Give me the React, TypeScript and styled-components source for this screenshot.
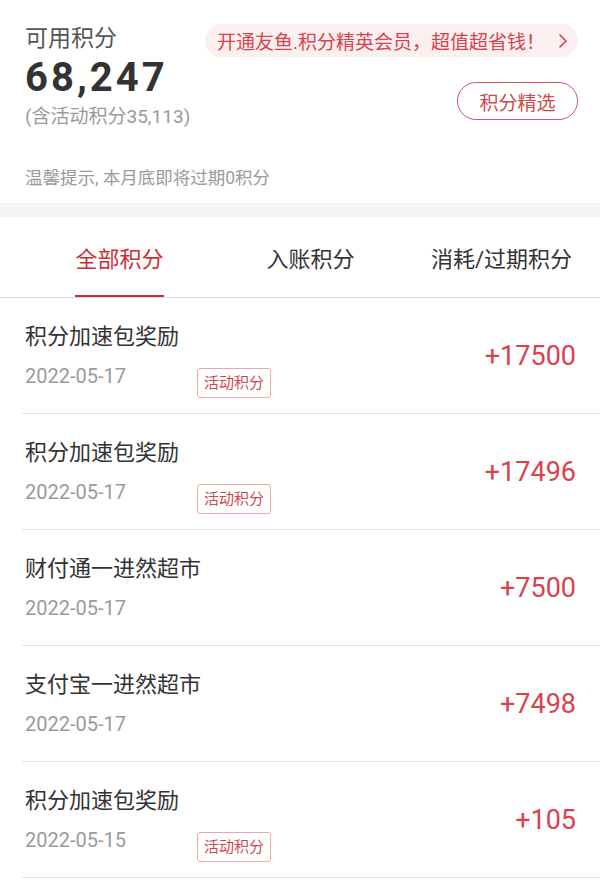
import React from "react";
import styled, { createGlobalStyle } from "styled-components";

const GlobalStyle = createGlobalStyle`
  html, body {
    margin: 0;
    padding: 0;
    background: #ffffff;
  }
  body {
    font-family: Roboto, "Noto Sans CJK SC", "Noto Sans", sans-serif;
    color: #333333;
    -webkit-font-smoothing: antialiased;
  }
  * { box-sizing: border-box; }
`;

const Page = styled.div`
  width: 600px;
  background: #ffffff;
`;

const Header = styled.header`
  height: 203px;
  display: flex;
  flex-direction: column;
  padding: 24px 22px 0 25px;
`;

const TopRow = styled.div`
  display: flex;
  justify-content: space-between;
  align-items: flex-start;
`;

const Summary = styled.div`
  display: flex;
  flex-direction: column;
  white-space: nowrap;
`;

const Label = styled.div`
  font-size: 23px;
  line-height: 30px;
  color: #555555;
`;

const Balance = styled.div`
  margin-top: 2px;
  font-size: 40px;
  line-height: 44px;
  font-weight: 700;
  letter-spacing: 3px;
  color: #333333;
`;

const SubNote = styled.div`
  margin-top: 4px;
  font-size: 19px;
  line-height: 26px;
  color: #9a9a9a;
`;

const Tip = styled.div`
  margin-top: 36px;
  font-size: 17.5px;
  line-height: 24px;
  color: #9a9a9a;
  white-space: nowrap;
`;

const Actions = styled.div`
  display: flex;
  flex-direction: column;
  align-items: flex-end;
`;

const Promo = styled.a`
  height: 33px;
  display: flex;
  align-items: center;
  gap: 13px;
  padding: 0 10px 0 12px;
  border-radius: 17px;
  background: #fcefef;
  color: #d5434c;
  font-size: 19px;
  text-decoration: none;
  white-space: nowrap;
`;

const PillButton = styled.button`
  margin-top: 25px;
  width: 121px;
  height: 38px;
  border: 1.5px solid #d6545a;
  border-radius: 19px;
  background: #ffffff;
  color: #cf474e;
  font-family: inherit;
  font-size: 19px;
  padding: 0;
  cursor: pointer;
`;

const Band = styled.div`
  height: 14px;
  background: #f4f4f4;
`;

const TabBar = styled.nav`
  height: 81px;
  display: flex;
  padding: 0 3px 0 24px;
  border-bottom: 1px solid #dedede;
`;

const TabItem = styled.div`
  flex: 1;
  display: flex;
  justify-content: center;
`;

const TabLabel = styled.span<{ $active?: boolean }>`
  display: flex;
  align-items: center;
  padding-top: 2px;
  font-size: 22px;
  color: ${(p) => (p.$active ? "#cf2b33" : "#333333")};
  border-bottom: 2px solid ${(p) => (p.$active ? "#cf2b33" : "transparent")};
  white-space: nowrap;
`;

const List = styled.ul`
  list-style: none;
  margin: 0;
  padding: 0 0 0 22px;
`;

const Row = styled.li`
  height: 116px;
  display: flex;
  justify-content: space-between;
  padding: 0 24px 0 3px;
  border-bottom: 1px solid #e2e2e2;
`;

const Info = styled.div`
  display: flex;
  flex-direction: column;
  padding-top: 24px;
`;

const Title = styled.div`
  font-size: 22px;
  line-height: 30px;
  color: #333333;
`;

const Meta = styled.div`
  margin-top: 12px;
  display: flex;
  align-items: flex-start;
`;

const DateText = styled.span`
  width: 172px;
  font-size: 20px;
  line-height: 24px;
  color: #9a9a9a;
`;

const Tag = styled.span`
  margin-top: 4px;
  height: 30px;
  padding: 0 6px;
  border: 1px solid #e8a9a9;
  border-radius: 3px;
  font-size: 15px;
  line-height: 28px;
  color: #cf474e;
  white-space: nowrap;
`;

const Amount = styled.span`
  align-self: center;
  font-size: 27px;
  line-height: 32px;
  color: #d8434b;
`;

const Chevron = () => (
  <svg width="10" height="16" viewBox="0 0 10 16" fill="none">
    <polyline
      points="2,2 8,8 2,14"
      stroke="#d5434c"
      strokeWidth="1.6"
      strokeLinecap="round"
      strokeLinejoin="round"
    />
  </svg>
);

type Record = {
  title: string;
  date: string;
  amount: string;
  activity?: boolean;
};

const records: Record[] = [
  { title: "积分加速包奖励", date: "2022-05-17", amount: "+17500", activity: true },
  { title: "积分加速包奖励", date: "2022-05-17", amount: "+17496", activity: true },
  { title: "财付通一进然超市", date: "2022-05-17", amount: "+7500" },
  { title: "支付宝一进然超市", date: "2022-05-17", amount: "+7498" },
  { title: "积分加速包奖励", date: "2022-05-15", amount: "+105", activity: true },
];

const tabs = ["全部积分", "入账积分", "消耗/过期积分"];

export default function App() {
  return (
    <Page>
      <GlobalStyle />
      <Header>
        <TopRow>
          <Summary>
            <Label>可用积分</Label>
            <Balance>68,247</Balance>
            <SubNote>(含活动积分35,113)</SubNote>
          </Summary>
          <Actions>
            <Promo href="#">
              <span>开通友鱼.积分精英会员，超值超省钱！</span>
              <Chevron />
            </Promo>
            <PillButton type="button">积分精选</PillButton>
          </Actions>
        </TopRow>
        <Tip>温馨提示, 本月底即将过期0积分</Tip>
      </Header>
      <Band />
      <TabBar>
        {tabs.map((t, i) => (
          <TabItem key={t}>
            <TabLabel $active={i === 0}>{t}</TabLabel>
          </TabItem>
        ))}
      </TabBar>
      <List>
        {records.map((r, i) => (
          <Row key={i}>
            <Info>
              <Title>{r.title}</Title>
              <Meta>
                <DateText>{r.date}</DateText>
                {r.activity && <Tag>活动积分</Tag>}
              </Meta>
            </Info>
            <Amount>{r.amount}</Amount>
          </Row>
        ))}
      </List>
    </Page>
  );
}
